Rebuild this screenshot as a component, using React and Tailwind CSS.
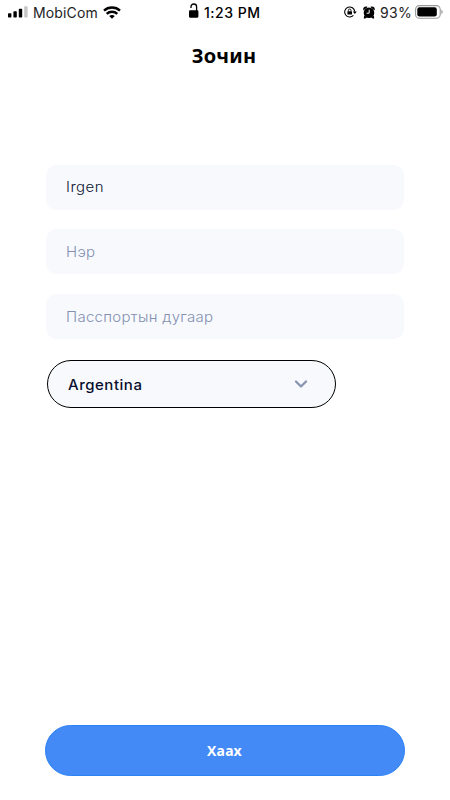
function SignalIcon() {
  return (
    <svg className="h-[12px] w-[20px] shrink-0" viewBox="0 0 20 12">
      <rect x="0" y="7.2" width="3.4" height="4.3" rx="0.7" />
      <rect x="5.4" y="5.2" width="3.4" height="6.3" rx="0.7" />
      <rect x="10.8" y="2.8" width="3.4" height="8.7" rx="0.7" />
      <rect x="16.2" y="0.2" width="3.4" height="11.3" rx="0.7" fill="#c5c5c5" />
    </svg>
  );
}

function WifiIcon() {
  return (
    <svg className="h-[13px] w-[18px] shrink-0" viewBox="0 0 18 13" fill="none" stroke="#000" strokeWidth="2.4">
      <path d="M1 4.6C5.4.4 12.6.4 17 4.6" />
      <path d="M3.7 7.8c2.9-2.8 7.7-2.8 10.6 0" />
      <path d="M6.2 10c1.6-1.4 4-1.4 5.6 0L9 12.8Z" fill="#000" stroke="none" />
    </svg>
  );
}

function UnlockIcon() {
  return (
    <svg className="h-[15px] w-[10px] shrink-0" viewBox="0 0 10 15">
      <rect x="0" y="7.3" width="9.4" height="7.4" rx="1.1" />
      <path d="M2 5V3.8a2.8 2.8 0 0 1 5.6 0V8" fill="none" stroke="#000" strokeWidth="1.3" />
    </svg>
  );
}

function RotationLockIcon() {
  return (
    <svg className="h-[12px] w-[13px] shrink-0" viewBox="0 0 13 12" fill="none" stroke="#000">
      <path d="M9.4 9.4A5 5 0 1 1 10.7 5.6" strokeWidth="1.1" />
      <path d="M8.8 5.4h4L10.8 8Z" fill="#000" stroke="none" />
      <rect x="3.4" y="5.2" width="4.6" height="3.4" rx="0.5" fill="#000" stroke="none" />
      <path d="M4.4 5.4V4.3a1.3 1.3 0 0 1 2.6 0v1.1" strokeWidth="0.9" />
    </svg>
  );
}

function AlarmIcon() {
  return (
    <svg className="h-[13px] w-[12px] shrink-0" viewBox="0 0 12 13">
      <circle cx="6" cy="6.7" r="5.3" />
      <path d="M.4 4.4C-.4 1.6 1.8-.1 4.6.9ZM11.6 4.4C12.4 1.6 10.2-.1 7.4.9ZM1.2 9.5l-.4 2.4.9.8 2.3-1.2ZM10.8 9.5l.4 2.4-.9.8L8 11.5Z" />
      <path d="M6.2 3.7v3.5H3.6" fill="none" stroke="#fff" strokeWidth="1" />
    </svg>
  );
}

function BatteryIcon() {
  return (
    <svg className="h-[14px] w-[28px] shrink-0" viewBox="0 0 28 14">
      <rect x="0.6" y="0.6" width="24.6" height="12.6" rx="3.8" fill="none" stroke="#999" strokeWidth="1.1" />
      <rect x="2.3" y="2.3" width="19.5" height="9.2" rx="2.2" />
      <path d="M26.4 4.8c1.7.7 1.7 3.5 0 4.2Z" fill="#999" />
    </svg>
  );
}

function StatusBar() {
  return (
    <header className="flex h-[25px] items-center text-[14px] leading-none text-[#222]">
      <div className="flex w-[189px] items-center pl-[8px]">
        <div className="-mt-px flex"><SignalIcon /></div>
        <span className="ml-[5px] w-[70px] whitespace-nowrap tracking-[0.15px]">MobiCom</span>
        <div className="-mt-px flex"><WifiIcon /></div>
      </div>
      <div className="flex w-[155px] items-center">
        <div className="-mt-[4px] flex"><UnlockIcon /></div>
        <span className="ml-[5px] whitespace-nowrap text-[14px] font-medium tracking-[0.5px] text-black">1:23 PM</span>
      </div>
      <div className="-mt-px flex"><RotationLockIcon /></div>
      <div className="-mt-px ml-[6px] flex"><AlarmIcon /></div>
      <span className="ml-[5px] w-[35px] whitespace-nowrap tracking-[0.3px]">93%</span>
      <div className="-mt-[2px] flex"><BatteryIcon /></div>
    </header>
  );
}

function Field({ children, className }) {
  return (
    <div className={`flex h-[45px] w-[358px] items-center rounded-[10px] bg-[#f7f9fd] pl-[20px] text-[14px] ${className}`}>
      <span className="origin-left scale-x-[1.07]">{children}</span>
    </div>
  );
}

export default function App() {
  return (
    <div className="flex h-[800px] w-[450px] flex-col overflow-hidden bg-white font-['Inter','Noto_Sans',sans-serif]">
      <StatusBar />
      <h1 className="mt-[18px] pr-[2px] text-center font-['Noto_Sans',sans-serif] text-[20px] leading-[26px] font-bold tracking-[0.2px] text-black">
        Зочин
      </h1>
      <main className="mt-[96px] flex flex-1 flex-col pl-[46px]">
        <Field className="pb-[2px] font-light tracking-[0.45px] text-[#0b1434]">Irgen</Field>
        <Field className="mt-[19px] pb-px font-light tracking-[0.3px] text-[#8390b0]">Нэр</Field>
        <Field className="mt-[20px] pb-px font-light tracking-[0.28px] text-[#8390b0]">Пасспортын дугаар</Field>
        <div className="mt-[21px] ml-px flex h-[48px] w-[289px] items-center justify-between rounded-full border border-black bg-[#f7f9fd] pr-[27px] pl-[20px] text-[14px] font-medium tracking-[0.5px] text-[#080e2d]">
          <span className="origin-left scale-x-[1.07]">Argentina</span>
          <svg className="h-[8px] w-[14px]" viewBox="0 0 14 8" fill="none" stroke="#8994b1" strokeWidth="2.3" strokeLinecap="round" strokeLinejoin="round">
            <path d="m2 1.5 5 5 5-5" />
          </svg>
        </div>
      </main>
      <button className="mb-[24px] ml-[45px] flex h-[51px] w-[360px] items-center justify-center rounded-full border border-[#2b82f5] bg-[#438af6] pr-px font-['Noto_Sans',sans-serif] text-[14px] font-bold tracking-[0.3px] text-white">
        Хаах
      </button>
    </div>
  );
}
